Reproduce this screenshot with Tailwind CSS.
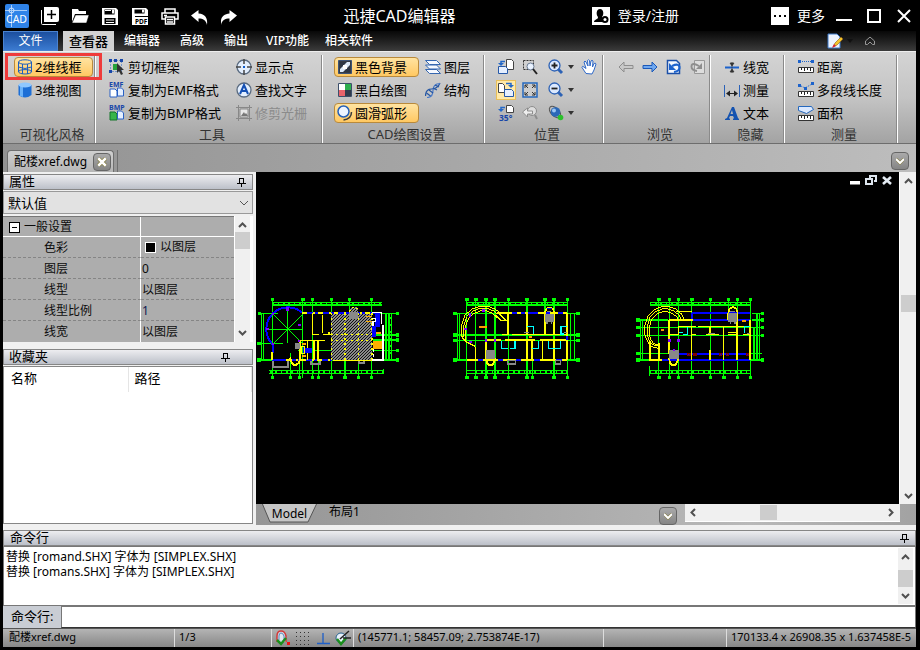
<!DOCTYPE html>
<html lang="zh-CN">
<head>
  <meta charset="UTF-8" />
  <title>迅捷CAD编辑器</title>
  <script src="https://cdn.jsdelivr.net/npm/@tailwindcss/browser@4"></script>
</head>
<body class="bg-black min-h-screen flex flex-col pl-[3px] pr-1 pb-[3px] text-[13px] leading-4 text-black font-['Noto_Sans','Noto_Sans_CJK_SC',sans-serif] whitespace-nowrap">

  <!-- Title bar -->
  <header class="h-[31px] flex items-center text-white pl-0.5 pr-1">
    <svg class="w-6 h-6 shrink-0" viewBox="0 0 24 24">
      <rect width="24" height="24" rx="2" fill="#2f83e8" />
      <path d="M0 6.5h22M6.5 1v22" stroke="#a9cdf8" />
      <circle cx="6.500" cy="6.500" r="2.500" fill="none" stroke="#cfe4ff" />
      <text x="1" y="19" font-size="10.500" fill="#fff" font-family="Noto Sans">CAD</text>
    </svg>
    <div class="flex gap-3 ml-3">
      <button aria-label="新建"><svg class="w-[18px] h-[18px]" viewBox="0 0 18 18"><path d="M3 0h13q2 0 2 2v11q0 2-2 2H3z" fill="#fff" /><path d="M.5 3v13.500q0 1 1 1H15" fill="none" stroke="#fff" /><path d="M10.500 3v9M6 7.500h9" stroke="#000" stroke-width="1.500" /></svg></button>
      <button aria-label="打开"><svg class="w-[18px] h-[18px]" viewBox="0 0 18 18"><path d="M1 15V2h6l1 2h7v3H4z" fill="#fff" /><path d="M4.500 8H18l-2.500 8H1z" fill="#fff" stroke="#000" stroke-width=".5" /></svg></button>
      <button aria-label="保存"><svg class="w-[18px] h-[18px]" viewBox="0 0 18 18"><path d="M1 1h14l2 2v15H1z" fill="#fff" /><path d="M3.500 2.500h10v5h-10zM3.500 11h11v6h-11z" fill="#000" /><path d="M4 3.500h6M5 13h8M5 15.500h8" stroke="#fff" /><path d="M11 2.500h2v4h-2z" fill="#fff" /></svg></button>
      <button aria-label="保存为PDF"><svg class="w-[18px] h-[18px]" viewBox="0 0 18 18"><path d="M1 1h14l2 2v15H1z" fill="#fff" /><path d="M3.500 2.500h10v4h-10zM4 9h13v1H4z" fill="#000" /><path d="M11 2.500h2v3h-2z" fill="#fff" /><text x="4" y="17" font-size="6.500" font-weight="700" fill="#000" font-family="Noto Sans">PDF</text></svg></button>
      <button aria-label="打印"><svg class="w-[18px] h-[18px]" viewBox="0 0 18 18" fill="none" stroke="#fff" stroke-width="1.500"><path d="M4 6V2h10v4M4 12H1V6h16v6h-3" /><path d="M4.500 10h9v7h-9z" /><path d="M6 12.500h6M6 15h6M3 8.500h3" /></svg></button>
      <button aria-label="撤销"><svg class="w-[18px] h-[18px]" viewBox="0 0 18 18"><path d="M0 8.500 7.500 3v3.500C14 7 17 11 16 18c-1-5-4-6.500-8.500-6.500V15z" fill="#fff" /></svg></button>
      <button aria-label="重做"><svg class="w-[18px] h-[18px]" viewBox="0 0 18 18"><path d="M16 8.500 8.500 3v3.500C2 7-1 11 0 18c1-5 4-6.500 8.500-6.500V15z" fill="#fff" /></svg></button>
    </div>
    <h1 class="flex-1 text-center text-base leading-5 pr-8">迅捷CAD编辑器</h1>
    <button class="flex items-center gap-2 text-sm leading-5">
      <svg class="w-[18px] h-[18px]" viewBox="0 0 18 18"><rect width="18" height="18" fill="#fff" /><path d="M2 15c0-3 4-2 4-5C4 8 4 2 8 2s4 6 2 8c0 1 0 1 1 2v3z" fill="#000" /><circle cx="13" cy="12.500" r="3.500" fill="#000" /><circle cx="13" cy="12.500" r="1.500" fill="#fff" /></svg>
      登录/注册
    </button>
    <button class="flex items-center gap-2 text-sm leading-5 ml-[92px]">
      <svg class="w-[18px] h-[18px]" viewBox="0 0 18 18"><rect width="18" height="18" fill="#fff" /><path d="M3 8h2v2H3zM8 8h2v2H8zM13 8h2v2h-2z" fill="#000" /></svg>
      更多
    </button>
    <div class="flex gap-[14px] ml-[11px]">
      <button aria-label="最小化"><svg class="w-4 h-4" viewBox="0 0 16 16"><path d="M0 12h16" stroke="#fff" stroke-width="2" /></svg></button>
      <button aria-label="最大化"><svg class="w-4 h-4" viewBox="0 0 16 16"><path d="M2 2h12v12H2z" fill="none" stroke="#fff" stroke-width="2" /></svg></button>
      <button aria-label="关闭"><svg class="w-4 h-4" viewBox="0 0 16 16"><path d="m2 2 12 12M14 2 2 14" stroke="#fff" stroke-width="2" /></svg></button>
    </div>
  </header>

  <!-- Menu tabs -->
  <nav class="h-5 flex items-stretch text-xs leading-4 font-medium text-white bg-linear-to-b from-[#080808] to-[#3c3c3c]">
    <button class="w-[55px] font-normal border border-[#4b83d0] bg-linear-to-b from-[#1c4f9e] to-[#3b7ad0]">文件</button>
    <button class="w-[51px] ml-[5px] text-[13px] text-black bg-[#d2d2d2]">查看器</button>
    <button class="px-2.5">编辑器</button>
    <button class="px-2.5">高级</button>
    <button class="px-2.5">输出</button>
    <button class="px-2">VIP功能</button>
    <button class="px-2">相关软件</button>
    <div class="ml-auto flex items-center gap-1 pr-[41px]">
      <button aria-label="样式"><svg class="w-4 h-4" viewBox="0 0 16 16"><path d="M1 1h9l3 3v11H1z" fill="#eef4ff" stroke="#3c79c8" /><path d="m6 14 2-4 6-6 2 2-6 6z" fill="#f5c52c" stroke="#8a5a12" stroke-width=".6" /><path d="m5 15 2-4 2 2z" fill="#d23" /></svg></button>
      <svg class="w-1.5 h-1 mr-2" viewBox="0 0 6 4"><path d="M0 0h6L3 4z" fill="#111" /></svg>
      <button aria-label="折叠功能区"><svg class="w-2.5 h-2.5" viewBox="0 0 10 10" fill="none" stroke="#999"><path d="m.5 5 4.500-4 4.500 4M.5 5v3.500h2L5 6l2.500 2.500h2V5" /></svg></button>
    </div>
  </nav>

  <!-- Ribbon -->
  <section class="relative h-[93px] flex border-t border-b border-t-[#eee] border-b-[#6d6d6d] bg-linear-to-b from-[#d4d4d4] via-[#c4c4c4] to-[#a3a3a3] pt-[3px]">
    <!-- highlight around the active visual style -->
    <div class="absolute left-[2px] top-[1px] w-[97px] h-[27px] border-3 border-[#ef3b3b] pointer-events-none"></div>

    <div class="w-[93px] flex flex-col border-r border-white shadow-[-1px_0_0_#8a8a8a_inset]">
      <div class="grid auto-rows-[23px] items-center pl-[11px]">
        <button class="h-5 w-[79px] flex items-center gap-0.5 pl-0.5 rounded-sm border border-[#b98a3c] bg-linear-to-b from-[#ffe3a0] to-[#ffc861]">
          <svg class="w-4 h-4" viewBox="0 0 16 16" fill="none" stroke="#1d5fc0"><ellipse cx="8" cy="3" rx="6.500" ry="2.200" /><ellipse cx="8" cy="12.800" rx="6.500" ry="2.200" /><path d="M1.500 3v10M14.500 3v10M5.500 5v10M10.500 5v10M1.500 8q6.500 3 13 0" /></svg>
          2维线框
        </button>
        <button class="h-5 w-[79px] flex items-center gap-0.5 pl-[3px]">
          <svg class="w-4 h-4" viewBox="0 0 16 16"><path d="M1.500 3v10q6.500 5 13 0V3z" fill="#1d6fd6" /><path d="M3 4v10l3 1V5z" fill="#69b2fa" /><ellipse cx="8" cy="3" rx="6.500" ry="2.500" fill="#8fc8ff" /></svg>
          3维视图
        </button>
      </div>
      <h2 class="mt-auto text-center text-[#333] leading-[18px] pl-1.5">可视化风格</h2>
    </div>

    <div class="w-[227px] flex flex-col border-r border-white shadow-[-1px_0_0_#8a8a8a_inset]">
      <div class="grid grid-cols-[127px_auto] auto-rows-[23px] items-center pl-[13px]">
        <button class="flex items-center gap-[3px]"><svg class="w-4 h-4" viewBox="0 0 16 16"><path d="M1.500 1.500h11v11h-11z" fill="none" stroke="#1d5fc0" stroke-dasharray="1 2" /><path d="M0 0h3v3H0zM11 0h3v3h-3zM0 11h3v3H0zM5 0h3v3H5z" fill="#1746a8" /><path d="M4 5h5v6H4z" fill="#27a33a" /><path d="M8 4v10l2-2 2 4 2-1-2-4h3z" fill="#333" /></svg>剪切框架</button>
        <button class="flex items-center gap-[3px]"><svg class="w-4 h-4" viewBox="0 0 16 16"><circle cx="8" cy="8" r="7" fill="#e3efff" stroke="#5a6b80" stroke-width="1.300" /><path d="M8 0v5M8 11v5M0 8h5M11 8h5" stroke="#444" stroke-width="1.500" /><path d="M7 7h2v2H7z" fill="#0b5bd0" /></svg>显示点</button>
        <button class="flex items-center gap-[3px]"><svg class="w-4 h-4 overflow-visible" viewBox="0 0 16 16"><text x="0" y="5" font-size="7" font-weight="700" fill="#1746a8" font-family="Noto Sans">EMF</text><path d="M1 7h5l2 2v6H1z" fill="#fff" stroke="#2a61c4" /><path d="M8.500 6h4l2 2v6h-6z" fill="#e5efff" stroke="#2a61c4" /></svg>复制为EMF格式</button>
        <button class="flex items-center gap-[3px]"><svg class="w-4 h-4" viewBox="0 0 16 16"><circle cx="8" cy="8" r="7" fill="#e3efff" stroke="#5a6b80" stroke-width="1.300" /><path d="M4 12 8 3l4 9M5.500 9h5" fill="none" stroke="#1550b4" stroke-width="2" /></svg>查找文字</button>
        <button class="flex items-center gap-[3px]"><svg class="w-4 h-4 overflow-visible" viewBox="0 0 16 16"><text x="0" y="5" font-size="7" font-weight="700" fill="#1746a8" font-family="Noto Sans">BMP</text><path d="M1 7h5l2 2v6H1z" fill="#38b54a" stroke="#14762a" /><path d="M8.500 6h4l2 2v6h-6z" fill="#e5efff" stroke="#2a61c4" /></svg>复制为BMP格式</button>
        <button disabled class="flex items-center gap-[3px] text-[#8b8b8b]"><svg class="w-4 h-4" viewBox="0 0 16 16"><path d="M2.500 0v16M13.500 0v16M0 2.500h16M0 13.500h16" stroke="#888" /><path d="M4 4h8v8H4z" fill="#e8e8e8" stroke="#888" /><path d="m5 11 3-4 1 2 1-1 2 3z" fill="#777" /></svg>修剪光栅</button>
      </div>
      <h2 class="mt-auto text-center text-[#333] leading-[18px] pl-1.5">工具</h2>
    </div>

    <div class="w-[162px] flex flex-col border-r border-white shadow-[-1px_0_0_#8a8a8a_inset]">
      <div class="grid grid-cols-[91px_auto] auto-rows-[23px] items-center pl-[11px]">
        <button class="h-5 w-[85px] flex items-center gap-0.5 pl-0.5 rounded-sm border border-[#b98a3c] bg-linear-to-b from-[#ffe3a0] to-[#ffc861]"><svg class="w-4 h-4" viewBox="0 0 16 16"><path d="M1.500 1.500h13v13h-13z" fill="#353b46" stroke="#3d5478" /><path d="M3 3h10v10H3z" fill="#dbe8f8" /><path d="M3 3h7L3 10zM13 6v7H6z" fill="#2d3644" /><path d="M6 6h4v4H6z" fill="#fff" /></svg>黑色背景</button>
        <button class="flex items-center gap-[3px]"><svg class="w-4 h-4" viewBox="0 0 16 16" fill="#f4f8ff" stroke="#3567b0"><path d="m.5 10.500 4 4h11l-4-4z" /><path d="m.5 6 4 4h11l-4-4z" /><path d="m.5 1.500 4 4h11l-4-4z" /></svg>图层</button>
        <button class="h-5 w-[85px] flex items-center gap-0.5 pl-[3px]"><svg class="w-4 h-4" viewBox="0 0 16 16"><path d="M1.500 1.500h13v13h-13z" fill="#fff" stroke="#3d4f6a" /><path d="M8 2h6v6H8z" fill="#2cae4e" /><path d="M2 8h6v6H2z" fill="#e8636b" /><path d="M8 8h6v6H8z" fill="#303b4c" /></svg>黑白绘图</button>
        <button class="flex items-center gap-[3px]"><svg class="w-4 h-4" viewBox="0 0 16 16" fill="none" stroke="#2456a4" stroke-width="1.200"><path d="M.5 14q0-7 6-7t8.500-6" /><path d="M2 15.500q6 0 6-7t7-7" stroke="#4a7ac8" /><path d="m1.500 11 4 3M4 8l4 3M8 6l4 2M10 3l4 2" /></svg>结构</button>
        <button class="h-5 w-[85px] flex items-center gap-0.5 pl-0.5 rounded-sm border border-[#b98a3c] bg-linear-to-b from-[#ffe3a0] to-[#ffc861]"><svg class="w-4 h-4" viewBox="0 0 16 16" fill="none"><circle cx="6.500" cy="6.500" r="5.500" fill="#edf4ff" stroke="#2560b8" stroke-width="1.500" /><path d="M14.500 7q0 7-8 8" stroke="#3b3b3b" stroke-width="1.500" /></svg>圆滑弧形</button>
      </div>
      <h2 class="mt-auto text-center text-[#333] leading-[18px] pl-1.5">CAD绘图设置</h2>
    </div>

    <div class="w-[119px] flex flex-col border-r border-white shadow-[-1px_0_0_#8a8a8a_inset]">
      <div class="grid grid-cols-[26px_26px_33px_18px] auto-rows-[23px] items-center pl-[11px]">
        <button aria-label="旋转视图" class="pl-0.5"><svg class="w-4 h-4" viewBox="0 0 16 16"><path d="M8.500.5h5l2 2v8h-7z" fill="#fff" stroke="#444" /><path d="M.5 7.500h7l2 2v5h-9z" fill="#e5efff" stroke="#2558a8" /><path d="M7 2.500H3v3" fill="none" stroke="#2368c8" stroke-width="1.500" /><path d="M0 4h6L3 7z" fill="#2368c8" /></svg></button>
        <button aria-label="窗口缩放"><svg class="w-4 h-4" viewBox="0 0 16 16"><path d="M1.500 1.500h10v9h-10z" fill="none" stroke="#333" stroke-dasharray="2 1" /><circle cx="8.500" cy="7.500" r="3.500" fill="#e9f2ff" stroke="#6c7d95" /><path d="m11 10 4 5" stroke="#222" stroke-width="2" /></svg></button>
        <button aria-label="放大" class="flex items-center gap-1"><svg class="w-4 h-4" viewBox="0 0 16 16"><circle cx="6.500" cy="6.500" r="5.500" fill="#dbe9ff" stroke="#2d62b5" stroke-width="1.300" /><path d="m10 10 4 4" stroke="#2d62b5" stroke-width="3" /><path d="M3.500 6.500h6M6.500 3.500v6" stroke="#222" stroke-width="1.800" /></svg><svg class="w-1.5 h-1" viewBox="0 0 6 4"><path d="M0 0h6L3 4z" fill="#333" /></svg></button>
        <button aria-label="平移"><svg class="w-4 h-4" viewBox="0 0 16 16"><path d="M5 14.500 1 8.500Q1 6.500 3 8L5 9.500 3 3q1-2 2 0l2 4L6.500 1.500q1-1.500 2 0L9 7l1-5q1-1.500 2 0L11.500 8 13 4.500q1.500-1 2 .5L13 11l-2 4z" fill="#fff" stroke="#2f69c8" /></svg></button>
        <button aria-label="复制视图" class="w-5 h-5 flex items-center justify-center border border-[#e8bf5a] bg-[#ffe9a8]"><svg class="w-4 h-4" viewBox="0 0 16 16"><path d="M.5 1.500h4l2 2v7h-6z" fill="#fff" stroke="#444" /><path d="M6.500 7.500h7l2 2v5h-9z" fill="#e5efff" stroke="#2558a8" /><path d="M8 1.500h5v3" fill="none" stroke="#2368c8" stroke-width="1.500" /><path d="M10 3h6l-3 3z" fill="#2368c8" /></svg></button>
        <button aria-label="全部显示"><svg class="w-4 h-4" viewBox="0 0 16 16"><path d="M1 1h14v14H1z" fill="#ccc" stroke="#2568be" stroke-width="1.500" /><path d="m3 3 3 3M13 3l-3 3M3 13l3-3M13 13l-3-3M3 6V3h3M10 3h3v3M3 10v3h3M10 13h3v-3" stroke="#333" fill="none" /></svg></button>
        <button aria-label="缩小" class="flex items-center gap-1"><svg class="w-4 h-4" viewBox="0 0 16 16"><circle cx="6.500" cy="6.500" r="5.500" fill="#dbe9ff" stroke="#2d62b5" stroke-width="1.300" /><path d="m10 10 4 4" stroke="#2d62b5" stroke-width="3" /><path d="M3.500 6.500h6" stroke="#222" stroke-width="1.800" /></svg><svg class="w-1.5 h-1" viewBox="0 0 6 4"><path d="M0 0h6L3 4z" fill="#333" /></svg></button>
        <span></span>
        <button aria-label="旋转35度" class="pl-0.5"><svg class="w-4 h-4 overflow-visible" viewBox="0 0 16 16"><path d="M8.500.5h5l2 2v5h-7z" fill="#fff" stroke="#444" /><path d="M7 2.500H3v3" fill="none" stroke="#2368c8" stroke-width="1.500" /><path d="M0 4h6L3 7z" fill="#2368c8" /><text x="1" y="15.500" font-size="8.500" font-weight="700" fill="#1746a8" font-family="Noto Sans">35°</text></svg></button>
        <button aria-label="上一缩放"><svg class="w-4 h-4" viewBox="0 0 16 16" fill="none" stroke="#8d8d8d"><circle cx="10" cy="6" r="4.500" fill="#ddd" /><path d="m13 10 2 4" stroke-width="2" /><path d="m.5 7 5-4v3h5v3h-5v3z" fill="#eee" /></svg></button>
        <button aria-label="三维观察" class="flex items-center gap-1"><svg class="w-4 h-4" viewBox="0 0 16 16"><ellipse cx="7" cy="7" rx="4" ry="7" transform="rotate(-45 7 7)" fill="none" stroke="#555" /><circle cx="7.500" cy="7" r="4.800" fill="#2a68b8" /><circle cx="6" cy="5.500" r="2" fill="#9bc6f4" /><circle cx="12.500" cy="12.500" r="2.800" fill="#2cc02c" /></svg><svg class="w-1.5 h-1" viewBox="0 0 6 4"><path d="M0 0h6L3 4z" fill="#333" /></svg></button>
      </div>
      <h2 class="mt-auto text-center text-[#333] leading-[18px] pl-1.5">位置</h2>
    </div>

    <div class="w-[107px] flex flex-col border-r border-white shadow-[-1px_0_0_#8a8a8a_inset]">
      <div class="h-[23px] flex items-center gap-2 pl-[14px]">
        <button aria-label="后退"><svg class="w-4 h-4" viewBox="0 0 16 16"><path d="m1 8 5-5v3.500h9v3H6V13z" fill="#c8c8c8" stroke="#8e8e8e" /></svg></button>
        <button aria-label="前进"><svg class="w-4 h-4" viewBox="0 0 16 16"><path d="m15 8-5-5v3.500H1v3h9V13z" fill="#6fa8f0" stroke="#1b58b8" /></svg></button>
        <button aria-label="上一视图"><svg class="w-4 h-4" viewBox="0 0 16 16"><path d="M1.500 1.500h9l3 3v10h-12z" fill="#f4f8ff" stroke="#1b4fa8" stroke-width="1.500" /><path d="M8 13q6-1 5.500-5T6 7" fill="none" stroke="#1d63cc" stroke-width="2.200" /><path d="M3 4v7h7z" fill="#1d63cc" /></svg></button>
        <button aria-label="下一视图"><svg class="w-4 h-4" viewBox="0 0 16 16"><path d="M4.500 1.500h10v13h-10z" fill="#ddd" stroke="#999" /><path d="M7 12q-6-1-5.500-5T9 7" fill="none" stroke="#8e8e8e" stroke-width="1.800" /><path d="M12 4v6H6z" fill="#8e8e8e" /></svg></button>
      </div>
      <h2 class="mt-auto text-center text-[#333] leading-[18px] pl-1.5">浏览</h2>
    </div>

    <div class="w-[74px] flex flex-col border-r border-white shadow-[-1px_0_0_#8a8a8a_inset]">
      <div class="grid auto-rows-[23px] items-center pl-[13px]">
        <button class="flex items-center gap-[3px]"><svg class="w-4 h-4" viewBox="0 0 16 16"><path d="M1 8.500h14" stroke="#1d63cc" stroke-width="2" /><path d="M8 3v11M6 4h4L8 7zM6 13h4l-2-3z" fill="#333" stroke="#333" stroke-width=".7" /></svg>线宽</button>
        <button class="flex items-center gap-[3px]"><svg class="w-4 h-4" viewBox="0 0 16 16"><path d="M.5 3v12M15.500 3v12" stroke="#2a62b8" /><path d="M3 11.500h10" stroke="#222" /><path d="M2 11.500 6 8.500v6zM14 11.500l-4-3v6z" fill="#222" /></svg>测量</button>
        <button class="flex items-center gap-[3px]"><svg class="w-4 h-4" viewBox="0 0 16 16"><path d="M8 2h2l4 11 1 1v1H9v-1l1-1-1-2H6l-1 2 1 1v1H1v-1l2-1zM8 5 6.500 9H9z" fill="#1553b0" fill-rule="evenodd" /></svg>文本</button>
      </div>
      <h2 class="mt-auto text-center text-[#333] leading-[18px] pl-1.5">隐藏</h2>
    </div>

    <div class="w-[113px] flex flex-col border-r border-white shadow-[-1px_0_0_#8a8a8a_inset]">
      <div class="grid auto-rows-[23px] items-center pl-[13px]">
        <button class="flex items-center gap-[3px]"><svg class="w-4 h-4" viewBox="0 0 16 16"><path d="M0 1h3v3H0zM13 1h3v3h-3z" fill="#1d63cc" /><path d="M4 2.500h9" stroke="#1d63cc" stroke-dasharray="1 1" /><path d="M.5 8.500h15v5H.5z" fill="#fff" stroke="#333" /><path d="M3.500 9v2M6.500 9v3M9.500 9v2M12.500 9v3" stroke="#222" /></svg>距离</button>
        <button class="flex items-center gap-[3px]"><svg class="w-4 h-4" viewBox="0 0 16 16"><path d="M0 2h3v3H0zM13 0h3v3h-3zM6 5h3v3H6z" fill="#1d63cc" /><path d="m3 4 4 2 7-4" fill="none" stroke="#1d63cc" stroke-dasharray="1 1" /><path d="M.5 9.500h15v5H.5z" fill="#fff" stroke="#333" /><path d="M3.500 10v2M6.500 10v3M9.500 10v2M12.500 10v3" stroke="#222" /></svg>多段线长度</button>
        <button class="flex items-center gap-[3px]"><svg class="w-4 h-4" viewBox="0 0 16 16"><path d="M.5 1.500h13l2 3-7 4-8-3z" fill="#dbe9ff" stroke="#2568be" /><path d="M.5 10.500h15v5H.5z" fill="#fff" stroke="#333" /><path d="M3.500 11v2M6.500 11v3M9.500 11v2M12.500 11v3" stroke="#222" /></svg>面积</button>
      </div>
      <h2 class="mt-auto text-center text-[#333] leading-[18px] pl-1.5">测量</h2>
    </div>
  </section>

  <!-- Document tabs -->
  <div class="h-7 flex items-end pr-[7px] bg-linear-to-r from-[#929292] to-[#bdbdbd]">
    <div class="h-[22px] ml-1 flex items-center gap-1.5 pl-1.5 pr-0.5 rounded-t-sm border border-b-0 border-[#6f6f6f] bg-linear-to-b from-[#d0d0d0] to-[#b6b6b6] text-xs leading-4">
      配楼xref.dwg
      <button aria-label="关闭文档" class="w-[18px] h-[18px] rounded-sm border border-[#666] bg-linear-to-b from-[#aaa] to-[#858585] flex items-center justify-center"><svg class="w-2.5 h-2.5" viewBox="0 0 8 8"><path d="m1 1 6 6M7 1 1 7" stroke="#7d7430" stroke-width="3" /><path d="m1 1 6 6M7 1 1 7" stroke="#fff" stroke-width="2" /></svg></button>
    </div>
    <div class="w-[3px] h-[22px] ml-px border-r border-[#6f6f6f]"></div>
    <button aria-label="文档列表" class="ml-auto mb-0.5 w-[18px] h-[18px] rounded-sm border border-[#666] bg-linear-to-b from-[#aaa] to-[#858585] flex items-center justify-center"><svg class="w-2 h-2" viewBox="0 0 8 8"><path d="m0 2 4 4 4-4" fill="none" stroke="#7d7430" stroke-width="3" /><path d="m0 2 4 4 4-4" fill="none" stroke="#fff" stroke-width="2" /></svg></button>
  </div>

  <main class="flex-1 flex min-h-[353px]">
    <!-- Side panels -->
    <aside class="w-[253px] shrink-0 pr-[3px] pt-0.5 flex flex-col bg-[#f0f0f0]">
      <h2 class="h-4 flex items-center justify-between border border-[#868686] bg-linear-to-b from-[#ededf0] to-[#bcc0c9] pl-[5px] pr-1.5 pb-0.5">属性 <svg class="w-2.5 h-2.5 mt-0.5" viewBox="0 0 10 10" shape-rendering="crispEdges"><path d="M3 1h5M3.500 1v5M7 1v5M1 6.500h9M5.500 6v4" stroke="#000" /></svg></h2>
      <div class="relative mt-px">
        <select aria-label="对象类型" class="appearance-none block w-full h-[23px] px-1 bg-[#e2e2e2] border border-[#999] leading-5"><option>默认值</option></select>
        <svg class="absolute right-1 top-2 w-2.5 h-2 pointer-events-none" viewBox="0 0 10 8"><path d="m1 2 4 4 4-4" fill="none" stroke="#555" /></svg>
      </div>
      <div class="flex justify-between mt-0.5 bg-white">
        <table class="w-[231px] text-xs bg-[#adadad] text-[#0c0c0c]">
          <tbody class="block">
            <tr class="flex h-[21px] border-t border-[#777] border-b border-b-white"><th class="w-[138px] border-r border-white font-normal text-left flex items-center gap-1 pl-1.5 pt-px"><svg class="w-[11px] h-[11px]" viewBox="0 0 11 11" shape-rendering="crispEdges"><path d="M.5.5h10v10H.5z" fill="#fff" stroke="#000" /><path d="M3 5.500h5" stroke="#000" /></svg>一般设置</th><td></td></tr>
            <tr class="flex h-[21px] leading-[22px]"><th class="w-[138px] border-r border-r-white border-b border-b-[#858585] border-dashed [border-right-style:solid] font-normal text-left pl-[41px]">色彩</th><td class="flex-1 border-b border-[#858585] border-dashed flex items-center gap-1 pl-1"><span class="w-[11px] h-[11px] bg-black border border-white"></span>以图层</td></tr>
            <tr class="flex h-[21px] leading-[22px]"><th class="w-[138px] border-r border-r-white border-b border-b-[#858585] border-dashed [border-right-style:solid] font-normal text-left pl-[41px]">图层</th><td class="flex-1 border-b border-[#858585] border-dashed pl-px">0</td></tr>
            <tr class="flex h-[21px] leading-[22px]"><th class="w-[138px] border-r border-r-white border-b border-b-[#858585] border-dashed [border-right-style:solid] font-normal text-left pl-[41px]">线型</th><td class="flex-1 border-b border-[#858585] border-dashed pl-px">以图层</td></tr>
            <tr class="flex h-[21px] leading-[22px]"><th class="w-[138px] border-r border-r-white border-b border-b-[#858585] border-dashed [border-right-style:solid] font-normal text-left pl-[41px]">线型比例</th><td class="flex-1 border-b border-[#858585] border-dashed pl-px text-[#101a50]">1</td></tr>
            <tr class="flex h-[21px] leading-[22px]"><th class="w-[138px] border-r border-white font-normal text-left pl-[41px]">线宽</th><td class="pl-px">以图层</td></tr>
          </tbody>
        </table>
        <div class="w-[15px] mr-[3px] flex flex-col items-center bg-[#f0f0f0]">
          <svg class="w-[9px] h-4" viewBox="0 0 9 16"><path d="m1 11 3.500-3.500L8 11" fill="none" stroke="#505050" stroke-width="2" /></svg>
          <div class="w-[15px] h-[17px] bg-[#cdcdcd]"></div>
          <svg class="w-[9px] h-4 mt-auto" viewBox="0 0 9 16"><path d="m1 5 3.500 3.500L8 5" fill="none" stroke="#505050" stroke-width="2" /></svg>
        </div>
      </div>
      <h2 class="h-4 mt-[7px] flex items-center justify-between border border-[#868686] bg-linear-to-b from-[#ededf0] to-[#bcc0c9] pl-[5px] pr-[22px] pb-0.5">收藏夹 <svg class="w-2.5 h-2.5 mt-0.5" viewBox="0 0 10 10" shape-rendering="crispEdges"><path d="M3 1h5M3.500 1v5M7 1v5M1 6.500h9M5.500 6v4" stroke="#000" /></svg></h2>
      <div class="flex-1 mt-px mb-px bg-white border border-[#868686]">
        <table class="w-full table-fixed text-left">
          <thead><tr class="h-[25px] align-top leading-[22px]"><th class="w-[124px] font-normal pl-[7px] border-r border-[#e5e5e5]">名称</th><th class="font-normal pl-1.5 border-r border-[#e5e5e5]">路径</th></tr></thead>
        </table>
      </div>
    </aside>

    <!-- Drawing area -->
    <section class="flex-1 min-w-0 flex flex-col">
      <div class="flex-1 flex min-h-0 bg-black">
        <div class="relative flex-1 min-w-0 overflow-hidden">
          <svg class="block w-[642px] h-[332px]" viewBox="256 172 642 332" fill="none" shape-rendering="crispEdges">
            <defs>
              <pattern id="hatch" width="9" height="9" patternUnits="userSpaceOnUse"><path d="M0 0h9v9H0z" fill="#888" /><path d="M0 6h3v3H0zM3 3h3v3H3zM6 0h3v3H6z" fill="#111" /></pattern>
            </defs>

            <!-- first plan -->
            <g transform="translate(255 290) scale(.33333)" stroke-width="4">
              <g stroke="#00ff00">
                <path d="M52 28v237M142 28v237M172 28v237M229 28v237M349 28v237M283 28v42M106 190v75M133 215v50M190 150v115M270 180v85M310 215v50" />
                <path d="M52 38h328M52 45h328M43 241h343M43 251h343M10 70h60M345 70h85M10 160h75M10 210h420M355 135h75M355 150h75M130 181h300" />
                <path d="M19 70v140M26 70v140M393 70v140M402 70v140M410 70v140M385 236v14" />
                <path d="M98 50v110M35 118h105M54 72l90 90M143 72l-90 90" stroke-width="3" />
                <path d="M52 42h328M45 245h341" stroke-width="12" stroke-dasharray="5 11" />
                <path d="M47 29h11M137 29h14M167 29h11M224 29h11M278 29h11M344 29h11M47 262h11M101 262h11M128 262h11M167 262h11M185 262h11M224 262h11M265 262h11M305 262h11M344 262h11" stroke-width="10" />
                <path d="M8 70h10M7 160h10M7 210h10M422 70h10M422 135h10M422 150h10M422 181h10M422 210h10" stroke-width="10" />
                <path d="M404 80v120" stroke-width="12" stroke-dasharray="6 15" />
              </g>
              <path d="M52 162A65 65 0 1 1 146 72" stroke="#0000ff" stroke-width="6" />
              <path d="M54 160v30M52 210h180M142 69h232" stroke="#0000ff" stroke-width="6" />
              <path d="M92 210h140M142 69h232" stroke="#ffff00" stroke-width="6" stroke-dasharray="14 18 6 9" />
              <path d="M52 185v24M173 70v64M203 75v55M173 134h18M205 134h24M223 125v10M135 152h75M190 152v58M135 152v58M158 152v58M178 152v58M235 210h145" stroke="#ffff00" stroke-width="5" />
              <path d="m105 203 6 16 6 5h8l6-5 6-16" stroke="#ffff00" stroke-width="6" />
              <path d="M229 72h54l5-20h18l5 20h39v137H229z" fill="url(#hatch)" />
              <path d="M283 66h26v20h-26z" fill="#888" />
              <path d="M229 70v140M270 70v140M310 70v140M351 70v140M229 134h122M229 152h122M283 65l4-10 8-4h6l6 4 5 10" stroke="#ffff00" stroke-dasharray="5 10" />
              <path d="M54 212v20h46v-20M168 212v10h27v-10M312 212v8h16v-8" stroke="#888" stroke-width="6" />
              <path d="M120 158h14v18h-14z" fill="#888" />
              <path d="M139 170h10v20h-10z" stroke="#ffff00" /><path d="M143 172h3v16h-3zM150 173h22v17h-22zM350 108h12v34h-12zM360 70h14v42h-14z" fill="#0000ff" />
              <path d="M140 158h14v6h-14zM140 195h14v6h-14zM334 77h16v5h-16zM334 92h16v5h-16zM362 125h16v6h-16zM354 153h28v24h-28z" fill="#ffae00" />
              <path d="M350 68h30v35M384 105v105h-32M352 85h10v10h-8v12" stroke="#fff" />
              <path d="M355 178v30" stroke="#fff" stroke-dasharray="9 6" />
              <path d="M94 52h7v10h-7zM129 102h8v6h-8zM34 115h9v6h-9zM130 150h6v5h-6zM50 158h8v6h-8zM50 69h8v6h-8z" fill="#8000ff" />
            </g>

            <!-- second plan -->
            <g transform="translate(450 290) scale(.33333)" stroke-width="4">
              <g stroke="#00ff00">
                <path d="M50 28v237M77 28v237M108 28v237M135 28v237M175 28v237M231 28v237M285 28v40M312 28v237M352 28v237M247 150v115" />
                <path d="M50 38h302M50 45h302M50 241h302M50 251h302M10 70h375M10 135h375M10 151h375M10 210h375" />
                <path d="M22 70v140M29 70v140M361 70v140M373 70v140" />
                <path d="M50 42h302M77 245h275" stroke-width="12" stroke-dasharray="5 11" />
                <path d="M45 29h11M72 29h11M103 29h11M130 29h11M170 29h11M226 29h11M280 29h11M307 29h11M347 29h11M45 262h11M72 262h11M103 262h11M130 262h11M170 262h11M226 262h11M242 262h11M307 262h11M347 262h11" stroke-width="10" />
                <path d="M10 70h10M10 135h10M10 151h10M10 210h10M378 70h11M378 135h11M378 151h11M378 210h11" stroke-width="10" />
              </g>
              <path d="M36 140v-38l9-26 19-18 24-9h25l22 8 15 12M42 140v-36l8-24 17-16 22-9h22l20 8 10 10M48 150v-45l8-21 15-13 20-8h20l18 8 12 12" stroke="#ffff00" stroke-width="3" />
              <path d="M36 140l10 14 30 16M135 75l18 17h22M145 70l22 20" stroke="#ffff00" />
              <path d="M140 69h212M50 210h302" stroke="#0000ff" stroke-width="7" />
              <path d="M140 69h45M200 69h12M225 69h10M265 69h20M300 69h25M340 69h12M50 210h34M100 210h45M160 210h38M212 210h40M270 210h48M335 210h17" stroke="#ffff00" stroke-width="7" />
              <path d="M77 170v40M108 151v59M175 70v64M231 70v64M312 70v64M352 70v140M285 70v64M231 151v59M247 151v59M278 151v59M312 151v59M155 134h20M185 134h167M108 151h45M165 151h90M270 151h82" stroke="#ffff00" stroke-width="5" />
              <path d="m285 68 4-12 7-3h6l7 3 4 12M107 205l5 15 5 5h9l5-5 5-15" stroke="#ffff00" stroke-width="5" />
              <path d="M285 71h27v26h-27zM108 179h27v28h-27z" fill="#888" />
              <path d="M172 212h24v10h-24zM317 212h14v10h-14zM292 65h12M291 97v5M305 97v5M222 128h14M343 128h9" stroke="#888" />
              <path d="M155 153v23h18M195 153v23h-14M232 110h18v22M265 153v23h-18M296 153v23h35v-23M351 110h-18v22h10" stroke="#00ffff" />
              <path d="M87 108h24v5H87zM237 138h9v6h-9z" fill="#ff9c00" />
              <path d="M96 57h9v9h-9zM57 70h7v12h-7zM42 114h9v6h-9zM56 153h9v6h-9zM105 148h6v8h-6zM131 148h6v8h-6z" fill="#8000ff" />
              <path d="M348 137h6v13h-6zM290 53h15v5h-15z" fill="#0000ff" />
            </g>

            <!-- third plan -->
            <g transform="translate(630 290) scale(.33333)" stroke-width="4">
              <g stroke="#00ff00">
                <path d="M86 28v235M118 28v235M145 28v235M185 28v235M241 28v235M295 28v42M322 28v235M361 28v235M281 110v153" />
                <path d="M59 38h302M59 45h302M59 241h302M59 251h302M20 90h95M20 112h375M20 136h380M20 190h375M20 210h380M365 70h35M365 90h35" />
                <path d="M31 90v120M38 90v120M372 110v100M381 70v140M389 70v140M59 228v30" />
                <path d="M59 42h302M59 245h302" stroke-width="12" stroke-dasharray="5 11" />
                <path d="M81 29h11M113 29h11M140 29h11M180 29h11M236 29h11M290 29h11M317 29h11M356 29h11M81 262h11M113 262h11M140 262h11M180 262h11M236 262h11M276 262h11M317 262h11M356 262h11" stroke-width="10" />
                <path d="M19 90h10M19 112h10M19 136h10M19 190h10M19 210h10M392 70h10M392 90h10M392 112h10M392 136h10M392 210h10" stroke-width="10" />
              </g>
              <path d="M162 88l-7-16-19-16-24-7H98l-24 9-20 20-9 28v28l7 20 10 15 24 6M154 88l-8-14-16-12-20-6h-10l-22 8-18 18-8 26v26l6 18 10 12 20 5M146 88l-8-10-14-9-16-5h-8l-20 8-15 16-7 22v26l5 15 9 10 17 5M137 66h48" stroke="#ffff00" stroke-width="3" />
              <path d="M185 70h176M118 192h243M90 210h271" stroke="#0000ff" stroke-width="7" /><path d="M185 90h176M187 69v20" stroke="#0000ff" stroke-width="6" />
              <path d="M60 152v58h27v-50M60 210h36M118 90v102M146 110v24M185 110v100M241 110v25M281 110v100M322 70v140M361 90v120M241 180v30M295 70v20M118 90h70M145 110h52M204 110h157M118 134h30M183 134h15M228 134h40M295 134h25M340 134h22M295 128h25" stroke="#ffff00" stroke-width="5" />
              <path d="m295 68 4-12 7-4h6l7 4 4 12M116 205l5 15 5 5h9l5-5 6-15" stroke="#ffff00" stroke-width="5" />
              <path d="M293 70h28v26h-28zM118 179h28v28h-28z" fill="#888" />
              <path d="M300 64h16M234 130h20M351 130h10M301 96v5M315 96v5" stroke="#888" />
              <path d="M146 127h12M158 134h14v-22M361 110h-17v20" stroke="#00ffff" />
              <path d="M93 118h9v5h-9zM335 91h12v5h-12z" fill="#ff9c00" />
              <path d="M114 148h9v8h-9zM141 148h9v8h-9zM130 178h4v5h-4z" fill="#8000ff" />
              <path d="M172 191h8v5h-8zM192 191h6v5h-6zM269 191h6v5h-6zM289 191h7v5h-7zM350 191h6v5h-6z" stroke="#800000" />
            </g>
          </svg>
          <div class="absolute top-[2px] right-1.5 flex gap-1">
            <button aria-label="最小化图纸"><svg class="w-3 h-3" viewBox="0 0 12 12"><path d="M1 7h10v3.500H1z" fill="#fff" /></svg></button>
            <button aria-label="还原图纸"><svg class="w-3 h-3" viewBox="0 0 12 12" fill="none" stroke="#dde5ee" stroke-width="2"><path d="M5 4V2h6v5H9M1 5h6v5H1z" /></svg></button>
            <button aria-label="关闭图纸"><svg class="w-3 h-3" viewBox="0 0 12 12"><path d="m2 3 8 7M10 3l-8 7" stroke="#e4ebf3" stroke-width="2.600" /></svg></button>
          </div>
        </div>
        <div class="w-[17px] flex flex-col items-center bg-[#f0f0f0] border-l border-white">
          <svg class="w-[9px] h-4" viewBox="0 0 9 16"><path d="m1 11 3.500-3.500L8 11" fill="none" stroke="#505050" stroke-width="2" /></svg>
          <div class="w-[15px] h-[17px] mt-[107px] bg-[#cdcdcd]"></div>
          <svg class="w-[9px] h-4 mt-auto" viewBox="0 0 9 16"><path d="m1 6 3.500 3.500L8 6" fill="none" stroke="#505050" stroke-width="2" /></svg>
        </div>
      </div>
      <div class="h-[21px] flex items-start bg-linear-to-r from-[#969696] via-[#b8b8b8] via-75% to-[#a2a2a2] text-xs">
        <button class="relative w-[55px] h-[19px] ml-1.5 leading-4">
          <svg class="absolute inset-0 w-[55px] h-[19px]" viewBox="0 0 55 19"><path d="M0-1 8 18h38l9-19" fill="#c6c6c6" stroke="#555" /></svg>
          <span class="relative">Model</span>
        </button>
        <button class="ml-3 leading-4">布局1</button>
        <button aria-label="布局列表" class="ml-auto mt-[3px] w-[18px] h-[18px] rounded-sm border border-[#666] bg-linear-to-b from-[#aaa] to-[#858585] flex items-center justify-center"><svg class="w-2 h-2" viewBox="0 0 8 8"><path d="m0 2 4 4 4-4" fill="none" stroke="#7d7430" stroke-width="3" /><path d="m0 2 4 4 4-4" fill="none" stroke="#fff" stroke-width="2" /></svg></button>
        <div class="ml-2 w-[215px] h-[18px] mr-4 flex items-center bg-[#f0f0f0] border-b border-white">
          <svg class="w-4 h-[9px]" viewBox="0 0 16 9"><path d="M10 1 6.500 4.500 10 8" fill="none" stroke="#505050" stroke-width="2" /></svg>
          <div class="w-[17px] h-[15px] ml-[59px] bg-[#cdcdcd]"></div>
          <svg class="w-4 h-[9px] ml-auto" viewBox="0 0 16 9"><path d="m5 1 3.500 3.500L5 8" fill="none" stroke="#505050" stroke-width="2" /></svg>
        </div>
      </div>
    </section>
  </main>

  <!-- Command line -->
  <section class="pt-[5px] bg-[#f0f0f0]">
    <h2 class="h-4 flex items-center justify-between border border-[#868686] bg-linear-to-b from-[#ededf0] to-[#bcc0c9] pl-1.5 pr-1.5 pb-0.5">命令行 <svg class="w-2.5 h-2.5 mt-0.5" viewBox="0 0 10 10" shape-rendering="crispEdges"><path d="M3 1h5M3.500 1v5M7 1v5M1 6.500h9M5.500 6v4" stroke="#000" /></svg></h2>
    <div class="h-[60px] flex justify-between bg-white border border-[#777]">
      <div class="pl-0.5 pt-0.5 text-xs leading-[15px]">
        <p>替换 [romand.SHX] 字体为 [SIMPLEX.SHX]</p>
        <p>替换 [romans.SHX] 字体为 [SIMPLEX.SHX]</p>
      </div>
      <div class="w-[15px] my-px mr-0.5 flex flex-col items-center bg-[#f0f0f0]">
        <svg class="w-[9px] h-4" viewBox="0 0 9 16"><path d="m1 11 3.500-3.500L8 11" fill="none" stroke="#505050" stroke-width="2" /></svg>
        <div class="w-[15px] h-[17px] mt-[6px] bg-[#cdcdcd]"></div>
        <svg class="w-[9px] h-4 mt-auto" viewBox="0 0 9 16"><path d="m1 6 3.500 3.500L8 6" fill="none" stroke="#505050" stroke-width="2" /></svg>
      </div>
    </div>
    <div class="h-[22px] flex bg-[#c9cdd4]">
      <label for="cmd" class="w-[58px] pl-2 leading-[20px]">命令行:</label>
      <input id="cmd" type="text" class="flex-1 bg-white border border-[#777] border-b-[#333] px-1" />
    </div>
  </section>

  <!-- Status bar -->
  <footer class="h-[19px] flex items-stretch text-[11px] leading-4 border-t border-[#555] bg-linear-to-b from-[#b4b4b4] to-[#878787]">
    <span class="w-[172px] pl-1.5 border-r border-[#ddd]">配楼xref.dwg</span>
    <span class="w-[97px] pl-1 border-r border-[#ddd]">1/3</span>
    <div class="w-[82px] pl-[3px] flex items-center gap-1 border-r border-[#ddd]">
      <button aria-label="捕捉"><svg class="w-4 h-4" viewBox="0 0 16 16"><path d="M2 12V6q0-5 4-5t5 5v6" fill="#cfdce8" stroke="#d33a3a" stroke-width="1.500" /><path d="M4 10V6q0-3 2-3t3 3v4" fill="#dfe8f0" stroke="#5a86b8" /><path d="m2 10 4 4 5-6" fill="none" stroke="#1b8f1b" stroke-width="2.500" /><path d="M12 12h3v3h-3z" fill="#e11" /></svg></button>
      <button aria-label="栅格"><svg class="w-4 h-4" viewBox="0 0 16 16" stroke="#333" stroke-dasharray="1 3" shape-rendering="crispEdges"><path d="M1 2.500h14M1 6.500h14M1 10.500h14M1 14.500h14" /></svg></button>
      <button aria-label="正交"><svg class="w-4 h-4" viewBox="0 0 16 16"><path d="M8 3v10M2 13.500h13" stroke="#1d5fc8" stroke-width="1.300" /></svg></button>
      <button aria-label="对象捕捉"><svg class="w-4 h-4" viewBox="0 0 16 16"><circle cx="6" cy="8" r="5" fill="#e8f1fb" stroke="#28638f" /><path d="m2 9 4 5 5-6" fill="none" stroke="#1b8f1b" stroke-width="2.500" /><path d="m5 9 9-8M8 8h8" stroke="#222" stroke-width="1.500" /></svg></button>
    </div>
    <span class="w-[250px] pl-1 border-r border-[#ddd]">(145771.1; 58457.09; 2.753874E-17)</span>
    <span class="ml-auto w-[190px] pl-1 border-l border-[#ddd]">170133.4 x 26908.35 x 1.637458E-5</span>
  </footer>
</body>
</html>
